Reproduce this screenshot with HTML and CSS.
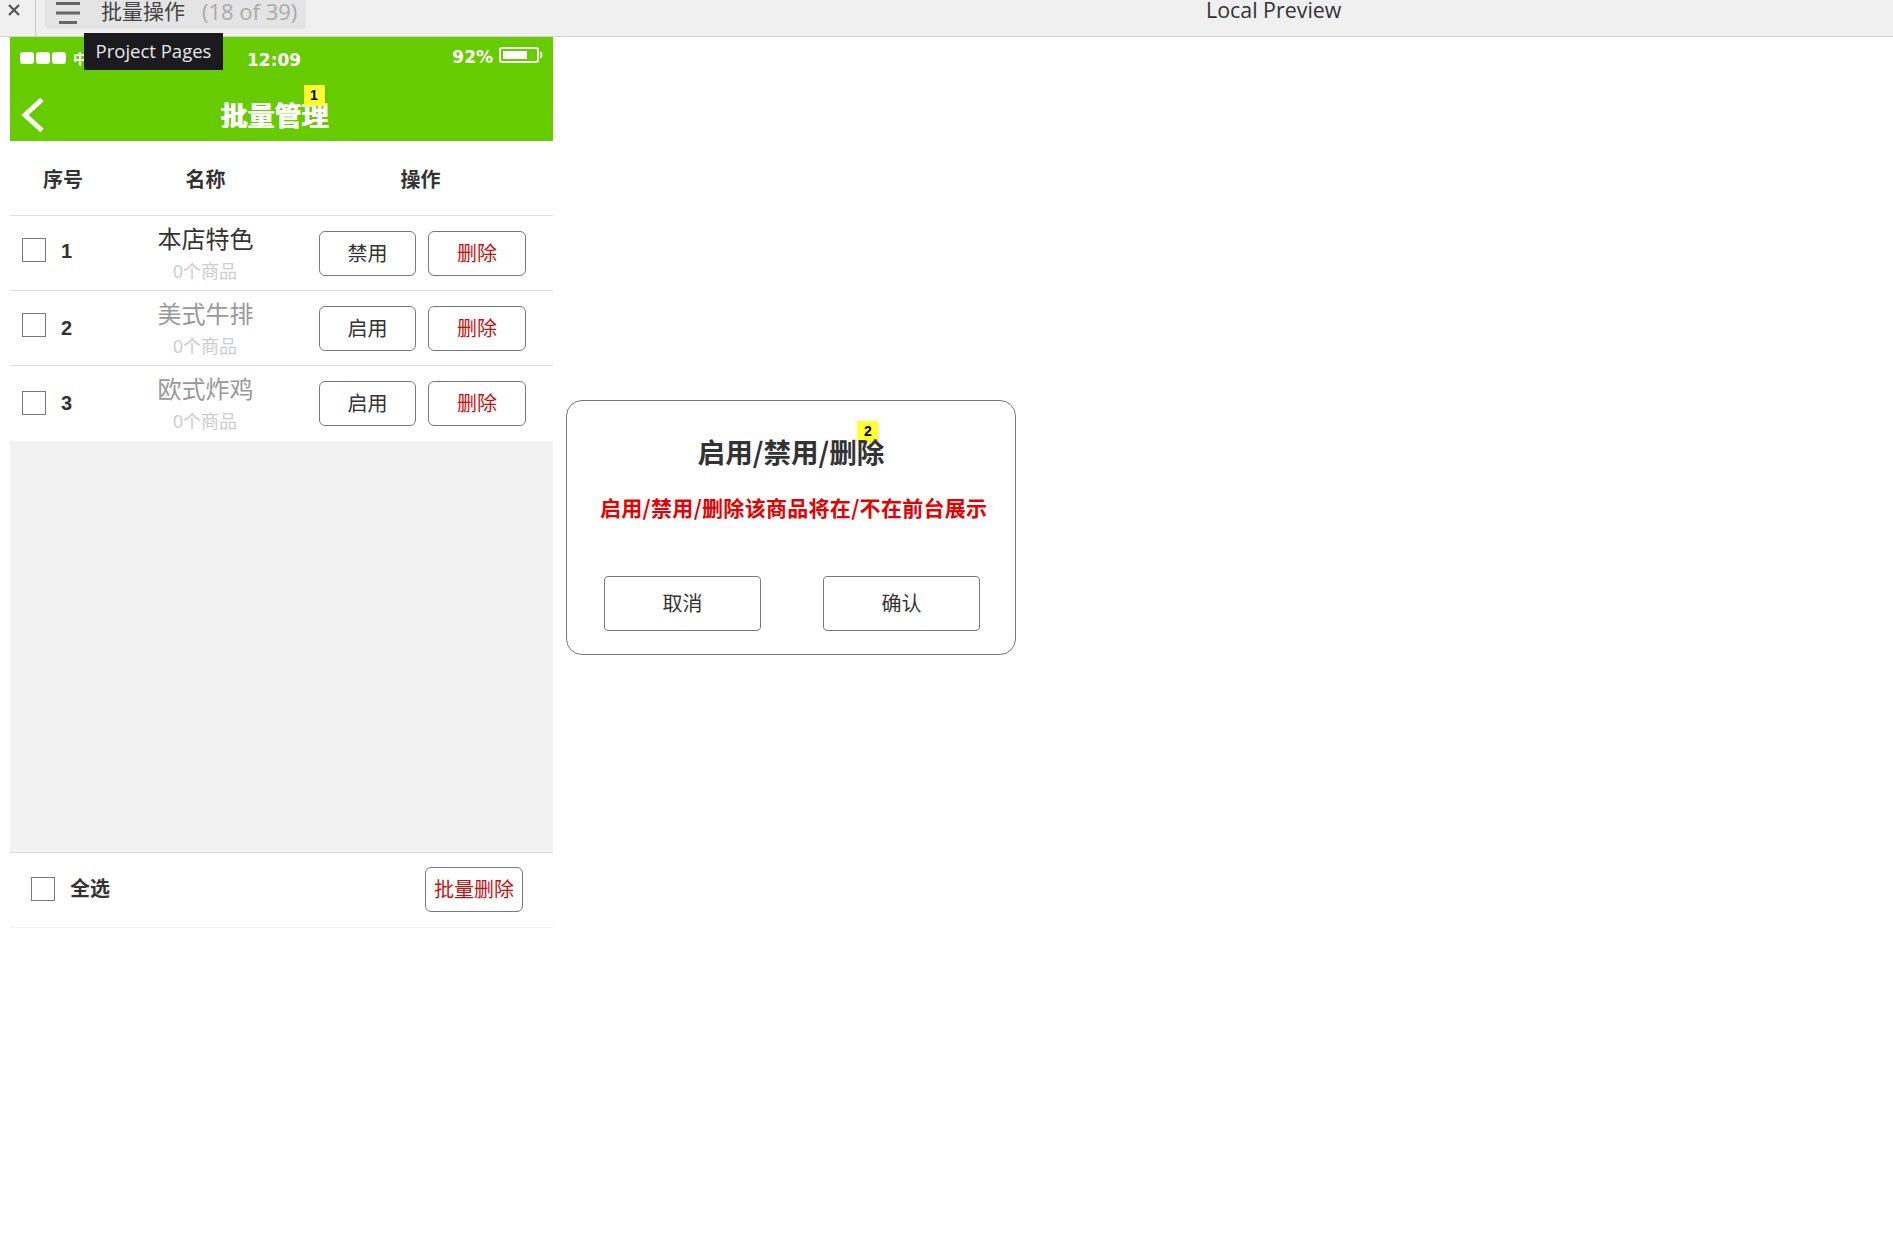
FILE: index.html
```html
<!DOCTYPE html>
<html lang="zh">
<head>
<meta charset="utf-8">
<title>批量操作</title>
<link rel="stylesheet" href="styles.css">
</head>
<body>
<header class="topbar">
  <div class="close-cell">
    <svg class="close-icon" viewBox="0 0 12 12" width="12" height="12"><path d="M1 1L11 11M11 1L1 11" stroke="#555" stroke-width="2.2" fill="none"/></svg>
  </div>
  <div class="page-tab">
    <svg class="menu-icon" viewBox="0 0 24 24" width="24" height="24"><path d="M0 1.5H24M0 11H24M3 20.5H21" stroke="#666" stroke-width="3" fill="none"/></svg>
    <span class="tab-title">批量操作</span>
    <span class="tab-count">(18 of 39)</span>
  </div>
  <div class="preview-title">Local Preview</div>
  <div class="tooltip">Project Pages</div>
</header>
<main class="canvas">
  <section class="phone">
    <div class="nav">
      <div class="status">
        <div class="signal"><i></i><i></i><i></i><span class="carrier">中</span></div>
        <div class="clock">12:09</div>
        <div class="power">
          <span>92%</span>
          <svg viewBox="0 0 44 16" width="44" height="16"><rect x="1" y="1" width="38" height="14" rx="2" fill="none" stroke="#fff" stroke-width="2"/><rect x="4" y="4" width="24" height="8" fill="#fff"/><path d="M41.5 5Q43.5 8 41.5 11" stroke="#fff" stroke-width="2" fill="none"/></svg>
        </div>
      </div>
      <div class="nav-title-row">
        <svg class="back" viewBox="0 0 24 36" width="24" height="36"><path d="M21 2.5L4 18L21 33.5" stroke="#fff" stroke-width="5" fill="none"/></svg>
        <h1 class="nav-title">批量管理<span class="badge badge-one">1</span></h1>
      </div>
    </div>
    <div class="row head">
      <div class="head-index">序号</div>
      <div class="head-name">名称</div>
      <div class="head-ops">操作</div>
    </div>
    <div class="row first">
      <div class="col-index"><span class="check"></span><b class="num">1</b></div>
      <div class="col-name"><div class="name">本店特色</div><div class="sub">0个商品</div></div>
      <div class="col-ops"><button class="btn">禁用</button><button class="btn danger">删除</button></div>
    </div>
    <div class="row">
      <div class="col-index"><span class="check"></span><b class="num">2</b></div>
      <div class="col-name"><div class="name off">美式牛排</div><div class="sub">0个商品</div></div>
      <div class="col-ops"><button class="btn">启用</button><button class="btn danger">删除</button></div>
    </div>
    <div class="row last">
      <div class="col-index"><span class="check"></span><b class="num">3</b></div>
      <div class="col-name"><div class="name off">欧式炸鸡</div><div class="sub">0个商品</div></div>
      <div class="col-ops"><button class="btn">启用</button><button class="btn danger">删除</button></div>
    </div>
    <div class="empty"></div>
    <div class="foot">
      <span class="check"></span>
      <b class="all">全选</b>
      <button class="btn danger bulk">批量删除</button>
    </div>
  </section>
  <section class="dialog">
    <h2 class="dialog-title">启用/禁用/删除<span class="badge badge-two">2</span></h2>
    <p class="dialog-text">启用/禁用/删除该商品将在/不在前台展示</p>
    <div class="dialog-actions">
      <button class="btn wide">取消</button>
      <button class="btn wide">确认</button>
    </div>
  </section>
</main>
</body>
</html>
```
FILE: styles.css
```css
* { box-sizing: border-box; }
html, body { margin: 0; padding: 0; background: #fff; }
body {
  width: 1893px;
  height: 1245px;
  overflow: hidden;
  font-family: "Liberation Sans", "Noto Sans CJK SC", sans-serif;
  color: #333;
}
.topbar {
  position: relative;
  display: flex;
  height: 37px;
  background: #f0f0f0;
  border-bottom: 1px solid #d4d4d4;
}
.close-cell {
  width: 36px;
  height: 36px;
  border-right: 1px solid #c8c8c8;
  padding: 4px 0 0 8px;
  flex: none;
}
.close-icon { display: block; }
.page-tab {
  display: flex;
  align-items: center;
  width: 261px;
  height: 29px;
  margin-left: 9px;
  padding-left: 11px;
  background: #e4e4e4;
  border-radius: 0 0 4px 4px;
  flex: none;
}
.menu-icon { display: block; margin-top: -1px; flex: none; }
.tab-title {
  margin-left: 21px;
  font-size: 21px;
  line-height: 24px;
  margin-top: -6px;
  color: #444;
}
.tab-count {
  margin-left: 17px;
  font-family: "Open Sans", sans-serif;
  font-size: 22px;
  line-height: 24px;
  margin-top: -8px;
  color: #aaa;
}
.preview-title {
  position: absolute;
  left: 1206px;
  top: 0;
  font-family: "Open Sans", sans-serif;
  font-size: 21.4px;
  line-height: 20px;
  color: #333;
}
.tooltip {
  position: absolute;
  left: 84px;
  top: 33px;
  z-index: 5;
  width: 139px;
  height: 37px;
  background: #1b1b1f;
  color: #e8e8e8;
  font-family: "Open Sans", sans-serif;
  font-size: 18.5px;
  line-height: 35px;
  text-align: center;
}
.canvas {
  display: flex;
  align-items: flex-start;
  padding-left: 10px;
}
.phone {
  display: flex;
  flex-direction: column;
  width: 543px;
  height: 891px;
  flex: none;
}
.nav {
  height: 104px;
  background: #66cc00;
  color: #fff;
  flex: none;
}
.status {
  display: flex;
  height: 48px;
  padding: 10px 10px 0 10px;
  font-family: "DejaVu Sans", sans-serif;
  font-weight: 700;
}
.signal { display: flex; align-items: flex-start; width: 227px; gap: 2px; padding-top: 5px; flex: none; }
.signal i {
  display: block;
  width: 14px;
  height: 12px;
  border-radius: 3px;
  background: #fff;
}
.carrier { margin-left: 5px; font-family: "Noto Sans CJK SC", sans-serif; font-size: 14px; line-height: 12px; }
.clock {
  margin-top: 3px;
  font-size: 17px;
  line-height: 20px;
  flex: 1;
}
.power {
  display: flex;
  align-items: flex-start;
  gap: 6px;
  font-size: 17px;
  line-height: 20px;
}
.nav-title-row {
  position: relative;
  display: flex;
  justify-content: center;
  height: 56px;
}
.back { position: absolute; left: 11px; top: 12px; }
.nav-title {
  position: relative;
  margin: 15px 0 0 -14px;
  font-size: 27px;
  line-height: 34px;
  font-weight: 700;
  color: #fff;
  text-shadow: 0.7px 0 0 #fff, -0.3px 0 0 #fff;
}
.badge {
  position: absolute;
  width: 21px;
  height: 21px;
  background: #ffff33;
  color: #000;
  font-family: "Liberation Sans", sans-serif;
  font-size: 14px;
  font-weight: 700;
  line-height: 20px;
  text-align: center;
  text-shadow: none;
  box-shadow: 1px 1px 2px rgba(0, 0, 0, 0.12);
}
.badge-one { right: 4px; top: -15px; }
.badge-two { right: 6px; top: -12px; height: 22px; z-index: -1; }
.row {
  display: grid;
  grid-template-columns: 133px 124px 1fr;
  height: 75px;
  border-bottom: 1px solid #e0e0e0;
  background: #fff;
  flex: none;
}
.row.last { border-bottom: 0; }
.head { font-size: 20px; font-weight: 700; line-height: 78px; }
.head-index { padding-left: 33px; }
.head-name { text-align: center; padding-left: 1px; }
.head-ops { padding-left: 21px; text-align: center; }
.col-index { display: flex; align-items: flex-start; padding-left: 12px; }
.check {
  display: block;
  width: 24px;
  height: 24px;
  border: 1px solid #797979;
  background: #fff;
  flex: none;
}
.row .check { margin-top: 22px; }
.row.last .check { margin-top: 25px; }
.num {
  margin: 25px 0 0 15px;
  font-size: 20px;
  line-height: 24px;
}
.first .num { margin-top: 23px; }
.col-name { text-align: center; padding: 8px 0 0 1px; }
.name { font-size: 24px; line-height: 32px; color: #333; }
.name.off { color: #999; }
.sub { font-size: 18px; line-height: 32px; color: #ccc; margin-left: -1px; }
.col-ops {
  display: flex;
  align-items: flex-start;
  gap: 12px;
  padding: 15px 0 0 52px;
}
.btn {
  width: 97px;
  height: 45px;
  padding: 2px 0 0;
  border: 1px solid #797979;
  border-radius: 6px;
  background: #fff;
  color: #333;
  font-family: inherit;
  font-size: 20px;
  line-height: 41px;
}
.btn.danger { color: #c80f0f; width: 98px; }
.empty {
  flex: 1;
  background: #f2f2f2;
}
.foot {
  display: flex;
  align-items: center;
  height: 76px;
  padding: 0 30px 2px 21px;
  border-top: 1px solid #ddd;
  border-bottom: 1px solid #f2f2f2;
  flex: none;
}
.all { margin-left: 15px; font-size: 20px; line-height: 30px; }
.bulk { margin-left: auto; }
.dialog {
  width: 450px;
  height: 255px;
  margin: 363px 0 0 13px;
  padding: 32px 0 0;
  border: 1px solid #797979;
  border-radius: 16px;
  background: #fff;
  flex: none;
  position: relative;
  z-index: 0;
}
.dialog-title {
  position: relative;
  width: max-content;
  margin: 0 auto;
  font-family: "Noto Sans CJK SC", sans-serif;
  font-size: 27.6px;
  line-height: 36px;
  font-weight: 700;
}
.dialog-text {
  margin: 24px 0 0 33px;
  font-family: "Noto Sans CJK SC", sans-serif;
  font-size: 21px;
  line-height: 28px;
  letter-spacing: 0.3px;
  font-weight: 700;
  color: #e60000;
  white-space: nowrap;
}
.dialog-actions {
  display: flex;
  justify-content: space-between;
  margin-top: 55px;
  padding: 0 35px 0 37px;
}
.btn.wide { width: 157px; height: 55px; border-radius: 4px; line-height: 51px; }
```
